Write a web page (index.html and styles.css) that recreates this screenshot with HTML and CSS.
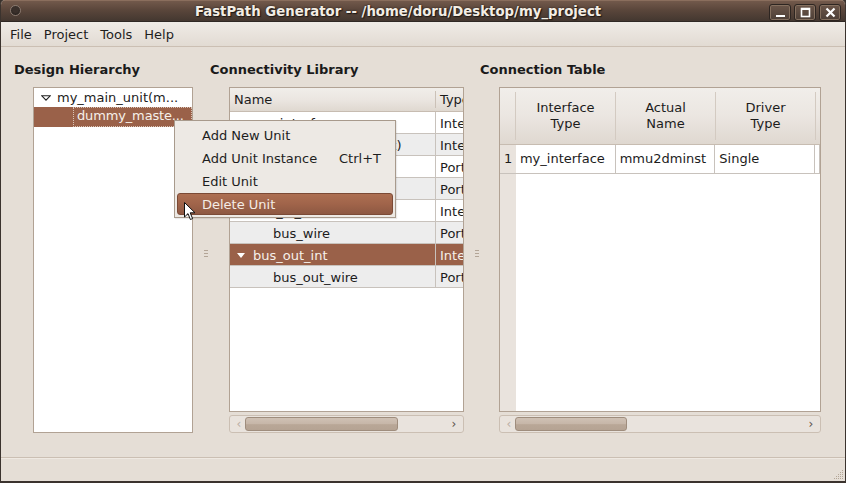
FILE: index.html
```html
<!DOCTYPE html>
<html>
<head>
<meta charset="utf-8">
<link rel="stylesheet" href="styles.css">
</head>
<body>
<div class="window">
  <div class="titlebar">
    <span class="tb-circle"></span>
    <span class="title">FastPath Generator -- /home/doru/Desktop/my_project</span>
    <div class="tb-buttons">
      <span class="tb-btn"><svg width="21" height="16" viewBox="0 0 21 16"><rect x="6" y="10" width="9" height="2" fill="#fff"/></svg></span>
      <span class="tb-btn"><svg width="21" height="16" viewBox="0 0 21 16"><rect x="6.5" y="3.5" width="8" height="8" fill="none" stroke="#fff" stroke-width="1.6"/><rect x="6" y="3" width="9" height="2" fill="#fff"/></svg></span>
      <span class="tb-btn"><svg width="21" height="16" viewBox="0 0 21 16"><path d="M6.5 3.5 L14.5 11.5 M14.5 3.5 L6.5 11.5" stroke="#fff" stroke-width="2.2"/></svg></span>
    </div>
  </div>
  <div class="menubar">
    <span class="menu-item">File</span>
    <span class="menu-item">Project</span>
    <span class="menu-item">Tools</span>
    <span class="menu-item">Help</span>
  </div>
  <div class="main">
    <section class="pane pane-left">
      <h2 class="pane-title">Design Hierarchy</h2>
      <div class="tree">
        <div class="tree-row first">
          <svg class="exp" width="10" height="6" viewBox="0 0 10 6"><path d="M0.8 0.8 H9.2 L5 5.2 Z" fill="none" stroke="#222" stroke-width="1.1"/></svg>
          <span>my_main_unit(m...</span>
        </div>
        <div class="tree-row selected">
          <span class="focus">dummy_maste...</span>
        </div>
      </div>
    </section>
    <div class="handle"><span class="dots"></span></div>
    <section class="pane pane-mid">
      <h2 class="pane-title">Connectivity Library</h2>
      <div class="lib">
        <div class="lib-grid">
          <div class="lib-head">
            <span class="hcell hname">Name</span>
            <span class="hcell htype">Type</span>
          </div>
          <div class="lib-row">
            <span class="c-name lvl0"><svg class="tri" width="8" height="5" viewBox="0 0 8 5"><path d="M0 0H8L4 5Z" fill="#222"/></svg>my_interface</span><span class="c-type">Interface</span>
          </div>
          <div class="lib-row alt">
            <span class="c-name lvl0"><svg class="tri" width="8" height="5" viewBox="0 0 8 5"><path d="M0 0H8L4 5Z" fill="#222"/></svg>my_interface_bus(inst)</span><span class="c-type">Interface</span>
          </div>
          <div class="lib-row">
            <span class="c-name lvl1">bus_in_wire</span><span class="c-type">Port</span>
          </div>
          <div class="lib-row alt">
            <span class="c-name lvl1">bus_out_wire</span><span class="c-type">Port</span>
          </div>
          <div class="lib-row">
            <span class="c-name lvl0"><svg class="tri" width="8" height="5" viewBox="0 0 8 5"><path d="M0 0H8L4 5Z" fill="#222"/></svg>bus_in_int</span><span class="c-type">Interface</span>
          </div>
          <div class="lib-row alt">
            <span class="c-name lvl1">bus_wire</span><span class="c-type">Port</span>
          </div>
          <div class="lib-row selected">
            <span class="c-name lvl0"><svg class="tri" width="8" height="5" viewBox="0 0 8 5"><path d="M0 0H8L4 5Z" fill="#fff"/></svg>bus_out_int</span><span class="c-type">Interface</span>
          </div>
          <div class="lib-row alt">
            <span class="c-name lvl1">bus_out_wire</span><span class="c-type">Port</span>
          </div>
        </div>
      </div>
      <div class="hscroll">
        <span class="arr">‹</span>
        <div class="track"><span class="thumb thumb-mid"></span></div>
        <span class="arr arr-r">›</span>
      </div>
    </section>
    <div class="handle"><span class="dots"></span></div>
    <section class="pane pane-right">
      <h2 class="pane-title">Connection Table</h2>
      <div class="conn">
        <div class="conn-head">
          <span class="ch rownum"></span>
          <span class="ch col"><span>Interface<br>Type</span></span>
          <span class="ch col"><span>Actual<br>Name</span></span>
          <span class="ch col"><span>Driver<br>Type</span></span>
          <span class="ch rest"></span>
        </div>
        <div class="conn-row">
          <span class="rn">1</span>
          <span class="cc">my_interface</span>
          <span class="cc">mmu2dminst</span>
          <span class="cc">Single</span>
          <span class="cc rest"></span>
        </div>
        <div class="conn-fill">
          <span class="rn"></span>
          <span class="fill"></span>
        </div>
      </div>
      <div class="hscroll">
        <span class="arr">‹</span>
        <div class="track"><span class="thumb thumb-right"></span></div>
        <span class="arr arr-r">›</span>
      </div>
    </section>
  </div>
  <div class="statusbar">
    <svg class="grip" width="12" height="12" viewBox="0 0 12 12">
      <g fill="#b4a697">
        <rect x="10" y="2" width="1" height="1"/>
        <rect x="8" y="4" width="1" height="1"/><rect x="10" y="4" width="1" height="1"/>
        <rect x="6" y="6" width="1" height="1"/><rect x="8" y="6" width="1" height="1"/><rect x="10" y="6" width="1" height="1"/>
        <rect x="4" y="8" width="1" height="1"/><rect x="6" y="8" width="1" height="1"/><rect x="8" y="8" width="1" height="1"/><rect x="10" y="8" width="1" height="1"/>
        <rect x="2" y="10" width="1" height="1"/><rect x="4" y="10" width="1" height="1"/><rect x="6" y="10" width="1" height="1"/><rect x="8" y="10" width="1" height="1"/><rect x="10" y="10" width="1" height="1"/>
      </g>
    </svg>
  </div>

  <div class="ctx-menu">
    <div class="ctx-item"><span>Add New Unit</span></div>
    <div class="ctx-item"><span>Add Unit Instance</span><span class="accel">Ctrl+T</span></div>
    <div class="ctx-item"><span>Edit Unit</span></div>
    <div class="ctx-item active"><span>Delete Unit</span></div>
  </div>
  <svg class="cursor" width="12" height="19" viewBox="0 0 12 19">
    <path d="M0.5 0.5 L0.5 15 L4 11.6 L6.4 17.5 L8.6 16.6 L6.2 10.8 L11 10.8 Z" fill="#fff" stroke="#111" stroke-width="1" stroke-linejoin="round"/>
  </svg>
</div>
</body>
</html>
```

FILE: styles.css
```css
* { box-sizing: border-box; }
html, body { margin: 0; padding: 0; }
body {
  width: 846px;
  height: 483px;
  overflow: hidden;
  font-family: "DejaVu Sans", "Liberation Sans", sans-serif;
  font-size: 13px;
  color: #1c1c1c;
  background: #3a322d;
}
.window {
  position: relative;
  width: 846px;
  height: 483px;
  display: flex;
  flex-direction: column;
  background: #e5ded6;
  border-left: 1px solid #3b332e;
  border-right: 1px solid #3b332e;
  border-bottom: 2px solid #3b332e;
  border-radius: 5px 5px 0 0;
  overflow: hidden;
}

/* title bar */
.titlebar {
  position: relative;
  flex: 0 0 22px;
  display: flex;
  align-items: center;
  justify-content: center;
  background: linear-gradient(#72594b 0%, #5a463b 45%, #433730 100%);
  border-top: 1px solid #8a6e5d;
  border-bottom: 1px solid #2f2824;
}
.tb-circle {
  position: absolute;
  left: 9px;
  top: 4px;
  width: 11px;
  height: 11px;
  border-radius: 50%;
  background: radial-gradient(circle at 50% 40%, #3a302b 40%, #2b2420 70%);
  border: 1px solid #8b7b71;
}
.title {
  font-weight: bold;
  font-size: 13.3px;
  color: #f3ede4;
  text-shadow: 0 0 2px #1f1915, 1px 1px 1px #1f1915;
  margin-right: 50px;
}
.tb-buttons {
  position: absolute;
  right: 4px;
  top: 3px;
  display: flex;
  gap: 3px;
}
.tb-btn {
  display: block;
  width: 22px;
  height: 17px;
  border-radius: 3px;
  border: 1px solid #2d2521;
  background: linear-gradient(#6b5649, #4d3f37);
  box-shadow: inset 0 0 0 1px #85705f;
}
.tb-btn svg { display: block; margin: 0; }

/* menubar */
.menubar {
  flex: 0 0 25px;
  display: flex;
  align-items: flex-start;
  padding: 4px 0 0 3px;
  background: linear-gradient(#efebe6, #e2dbd3);
  border-bottom: 1px solid #cbbfb3;
}
.menu-item {
  padding: 0 6px;
  line-height: 18px;
  color: #1e1e1e;
}

/* main */
.main {
  flex: 1 1 auto;
  display: flex;
  padding: 15px 0 0 13px;
}
.pane {
  display: flex;
  flex-direction: column;
}
.pane-title {
  margin: 0 0 9px 0;
  font-size: 13px;
  font-weight: bold;
  line-height: 16px;
  color: #1a1a1a;
}
.pane-left { width: 179px; }
.pane-mid { width: 254px; }
.pane-right { width: 341px; }

.handle {
  position: relative;
  width: 17px;
}
.handle + .pane-right { margin-left: -1px; }
.dots {
  position: absolute;
  left: 11px;
  top: 188px;
  width: 4px;
  height: 7px;
  background: repeating-linear-gradient(#b3a597 0 1px, transparent 1px 3px);
}

/* tree */
.tree {
  margin-left: 19px;
  width: 160px;
  height: 346px;
  background: #fff;
  border: 1px solid #b1a294;
}
.tree-row {
  height: 20px;
  display: flex;
  align-items: center;
  white-space: nowrap;
}
.tree-row.first { height: 19px; }
.tree-row .exp { margin: 0 6px 0 7px; }
.tree-row.selected {
  background: #9a6149;
  color: #f6f0ea;
  padding-left: 39px;
  align-items: stretch;
}
.tree-row .focus {
  display: block;
  line-height: 15px;
  padding: 0 0 3px 3px;
  border: 1px dotted #d9c3b6;
  flex: 1;
  overflow: visible;
  letter-spacing: -0.15px;
}

/* library table */
.lib {
  margin-left: 19px;
  width: 235px;
  height: 325px;
  background: #fff;
  border: 1px solid #b1a294;
  overflow: hidden;
}
.lib-grid { width: 280px; }
.lib-head {
  display: flex;
  height: 24px;
  background: linear-gradient(#f1eeea 0%, #ebe6e1 50%, #dfd8d0 100%);
  border-bottom: 1px solid #c7bcb1;
}
.hcell {
  display: flex;
  align-items: center;
  padding-left: 4px;
  white-space: nowrap;
}
.hname {
  width: 206px;
  border-right: 1px solid #cbc1b7;
  margin: 3px 0;
}
.htype { padding-left: 4px; }
.lib-row {
  display: flex;
  height: 22px;
  padding-top: 1px;
  border-bottom: 1px solid #c8c2bc;
  background: #fff;
  white-space: nowrap;
}
.lib-row.alt { background: #ededed; }
.lib-row.selected { background: #9a6149; color: #f6f0ea; }
.c-name {
  width: 206px;
  display: flex;
  align-items: center;
  border-right: 1px solid #c8c2bc;
  margin-top: -1px;
  padding-top: 1px;
  overflow: hidden;
}
.c-name.lvl0 { padding-left: 7px; }
.c-name.lvl1 { padding-left: 43px; }
.c-name .tri { margin-right: 8px; }
.c-type {
  display: flex;
  align-items: center;
  padding-left: 4px;
}

/* scrollbar */
.hscroll {
  margin: 3px 0 0 19px;
  height: 18px;
  display: flex;
  align-items: center;
  background: #e9e3dd;
  border: 1px solid #cbbfb3;
  border-radius: 3px;
  padding: 0 3px;
}
.pane-mid .hscroll { width: 235px; }
.pane-right .hscroll { width: 322px; }
.arr {
  width: 12px;
  font-size: 12px;
  line-height: 14px;
  color: #b9aea4;
  text-align: center;
}
.arr-r { color: #5c524a; }
.track {
  flex: 1;
  height: 14px;
  position: relative;
}
.thumb {
  display: block;
  height: 14px;
  border-radius: 3px;
  border: 1px solid #9f8d7d;
  background: linear-gradient(#cfc1b4 0%, #c6b6a8 50%, #b9a797 55%, #b5a393 100%);
}
.thumb-mid { width: 153px; }
.thumb-right { width: 112px; }

/* connection table */
.conn {
  margin-left: 19px;
  width: 322px;
  height: 325px;
  border: 1px solid #b1a294;
  background: #fff;
  display: flex;
  flex-direction: column;
  overflow: hidden;
}
.conn-head {
  display: flex;
  height: 57px;
  background: linear-gradient(#f1eeea 0%, #ebe6e1 50%, #dfd8d0 100%);
  border-bottom: 1px solid #c7bcb1;
  flex: 0 0 57px;
}
.ch {
  display: flex;
  align-items: center;
  justify-content: center;
  text-align: center;
  line-height: 16px;
  border-right: 1px solid #d3cac1;
  margin: 4px 0;
}
.ch.rownum { width: 16px; }
.ch.col { width: 100px; }
.ch.rest { flex: 1; border-right: none; }
.conn-row {
  display: flex;
  height: 29px;
  flex: 0 0 29px;
  border-bottom: 1px solid #c8c2bc;
}
.rn {
  width: 16px;
  background: #e9e3dd;
  display: flex;
  align-items: center;
  padding-left: 4px;
  padding-bottom: 1px;
  font-size: 13px;
}
.cc {
  width: 100px;
  display: flex;
  align-items: center;
  padding-left: 4px;
  padding-bottom: 1px;
  border-right: 1px solid #c8c2bc;
  white-space: nowrap;
}
.cc.rest { width: auto; flex: 0 0 4px; }
.conn-fill {
  flex: 1;
  display: flex;
}
.conn-fill .fill { flex: 1; }

/* status bar */
.statusbar {
  flex: 0 0 24px;
  position: relative;
  border-top: 1px solid #cbbfb3;
  box-shadow: inset 0 1px 0 #efe9e2;
}
.grip {
  position: absolute;
  right: 1px;
  bottom: 1px;
}

/* context menu */
.ctx-menu {
  position: absolute;
  left: 173px;
  top: 120px;
  width: 222px;
  padding: 3px 2px 2px;
  background: #ede9e4;
  border: 1px solid #a89a8c;
  box-shadow: 1px 1px 1px rgba(0,0,0,0.08);
}
.ctx-item {
  height: 23px;
  display: flex;
  align-items: center;
  padding-left: 25px;
  padding-right: 12px;
  color: #1e1e1e;
}
.ctx-item .accel { margin-left: auto; }
.ctx-item.active {
  background: linear-gradient(#ad6f52 0%, #a0644a 50%, #8d5842 100%);
  border: 1px solid #7b4a36;
  border-radius: 3px;
  color: #f4ece6;
  padding-left: 24px;
  padding-right: 11px;
  height: 22px;
}
.cursor {
  position: absolute;
  left: 183px;
  top: 202px;
}
```
